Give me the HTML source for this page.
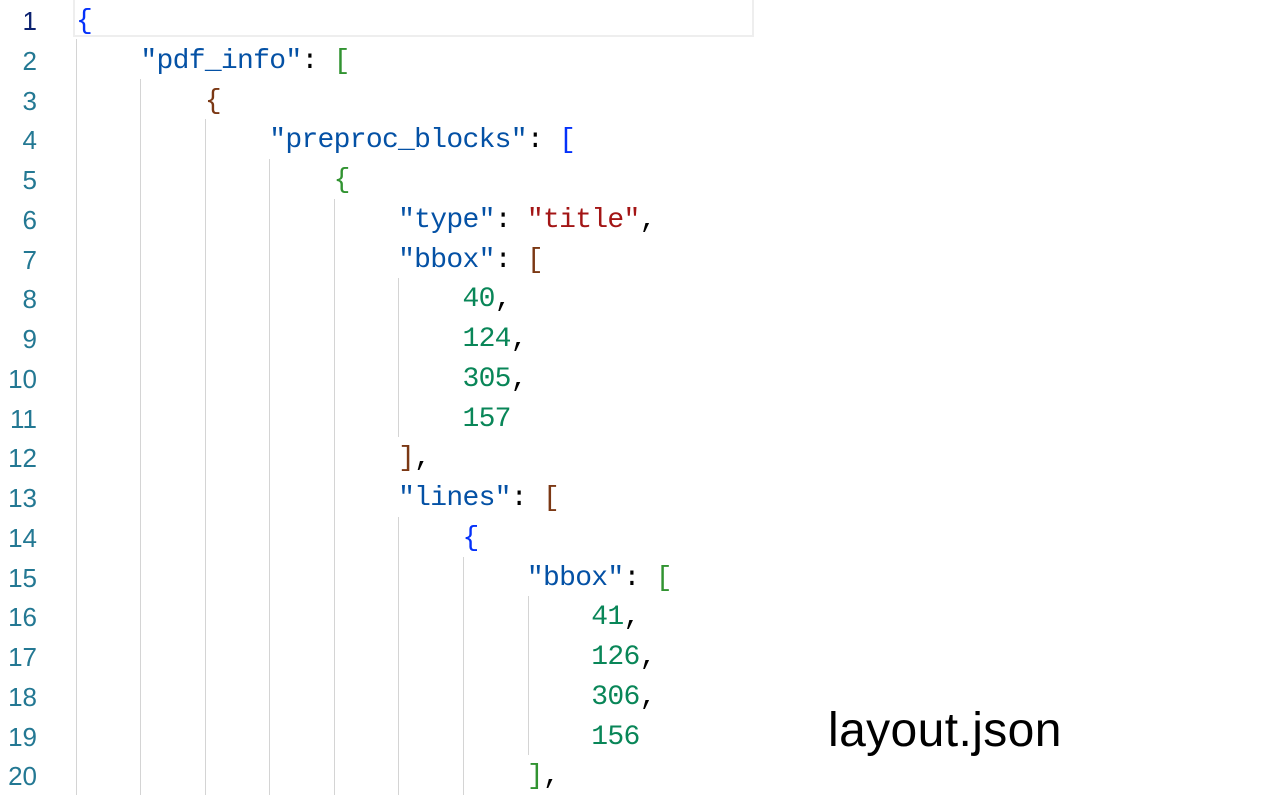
<!DOCTYPE html>
<html><head><meta charset="utf-8"><style>
html,body{margin:0;padding:0;background:#fff;width:1266px;height:795px;overflow:hidden;position:relative}
.ln{position:absolute;left:0;top:2px;width:37px;text-align:right;font-family:"Liberation Sans",sans-serif;font-size:26px;color:#237893;line-height:39.75px}
.code{position:absolute;left:76px;top:2px;font-family:"Liberation Mono",monospace;font-size:28px;letter-spacing:-0.7px;line-height:39.75px;white-space:pre;color:#000}
.k{color:#0451a5}.s{color:#a31515}.n{color:#098658}.b1{color:#0431fa}.b2{color:#319331}.b3{color:#7b3814}
.g{position:absolute;width:1px;background:#d4d4d4}
.hl{position:absolute;left:73px;top:0;width:677px;height:35px;border:2px solid #eeeeee;border-top:none}
.t{position:absolute;left:828px;top:703px;font-family:"Liberation Sans",sans-serif;font-size:48px;letter-spacing:0.4px;color:#000}
</style></head><body>
<div class="hl"></div>
<div class="ln">
<div style="color:#0b216f">1</div><div>2</div><div>3</div><div>4</div><div>5</div><div>6</div><div>7</div><div>8</div><div>9</div><div>10</div><div>11</div><div>12</div><div>13</div><div>14</div><div>15</div><div>16</div><div>17</div><div>18</div><div>19</div><div>20</div>
</div>
<div class="g" style="left:76px;top:39px;height:756px"></div>
<div class="g" style="left:140px;top:79px;height:716px"></div>
<div class="g" style="left:205px;top:119px;height:676px"></div>
<div class="g" style="left:269px;top:159px;height:636px"></div>
<div class="g" style="left:334px;top:199px;height:596px"></div>
<div class="g" style="left:398px;top:278px;height:159px"></div>
<div class="g" style="left:398px;top:517px;height:278px"></div>
<div class="g" style="left:463px;top:557px;height:238px"></div>
<div class="g" style="left:528px;top:596px;height:159px"></div>
<div class="code"><span class="b1">{</span>
    <span class="k">"pdf_info"</span>: <span class="b2">[</span>
        <span class="b3">{</span>
            <span class="k">"preproc_blocks"</span>: <span class="b1">[</span>
                <span class="b2">{</span>
                    <span class="k">"type"</span>: <span class="s">"title"</span>,
                    <span class="k">"bbox"</span>: <span class="b3">[</span>
                        <span class="n">40</span>,
                        <span class="n">124</span>,
                        <span class="n">305</span>,
                        <span class="n">157</span>
                    <span class="b3">]</span>,
                    <span class="k">"lines"</span>: <span class="b3">[</span>
                        <span class="b1">{</span>
                            <span class="k">"bbox"</span>: <span class="b2">[</span>
                                <span class="n">41</span>,
                                <span class="n">126</span>,
                                <span class="n">306</span>,
                                <span class="n">156</span>
                            <span class="b2">]</span>,</div>
<div class="t">layout.json</div>
</body></html>
